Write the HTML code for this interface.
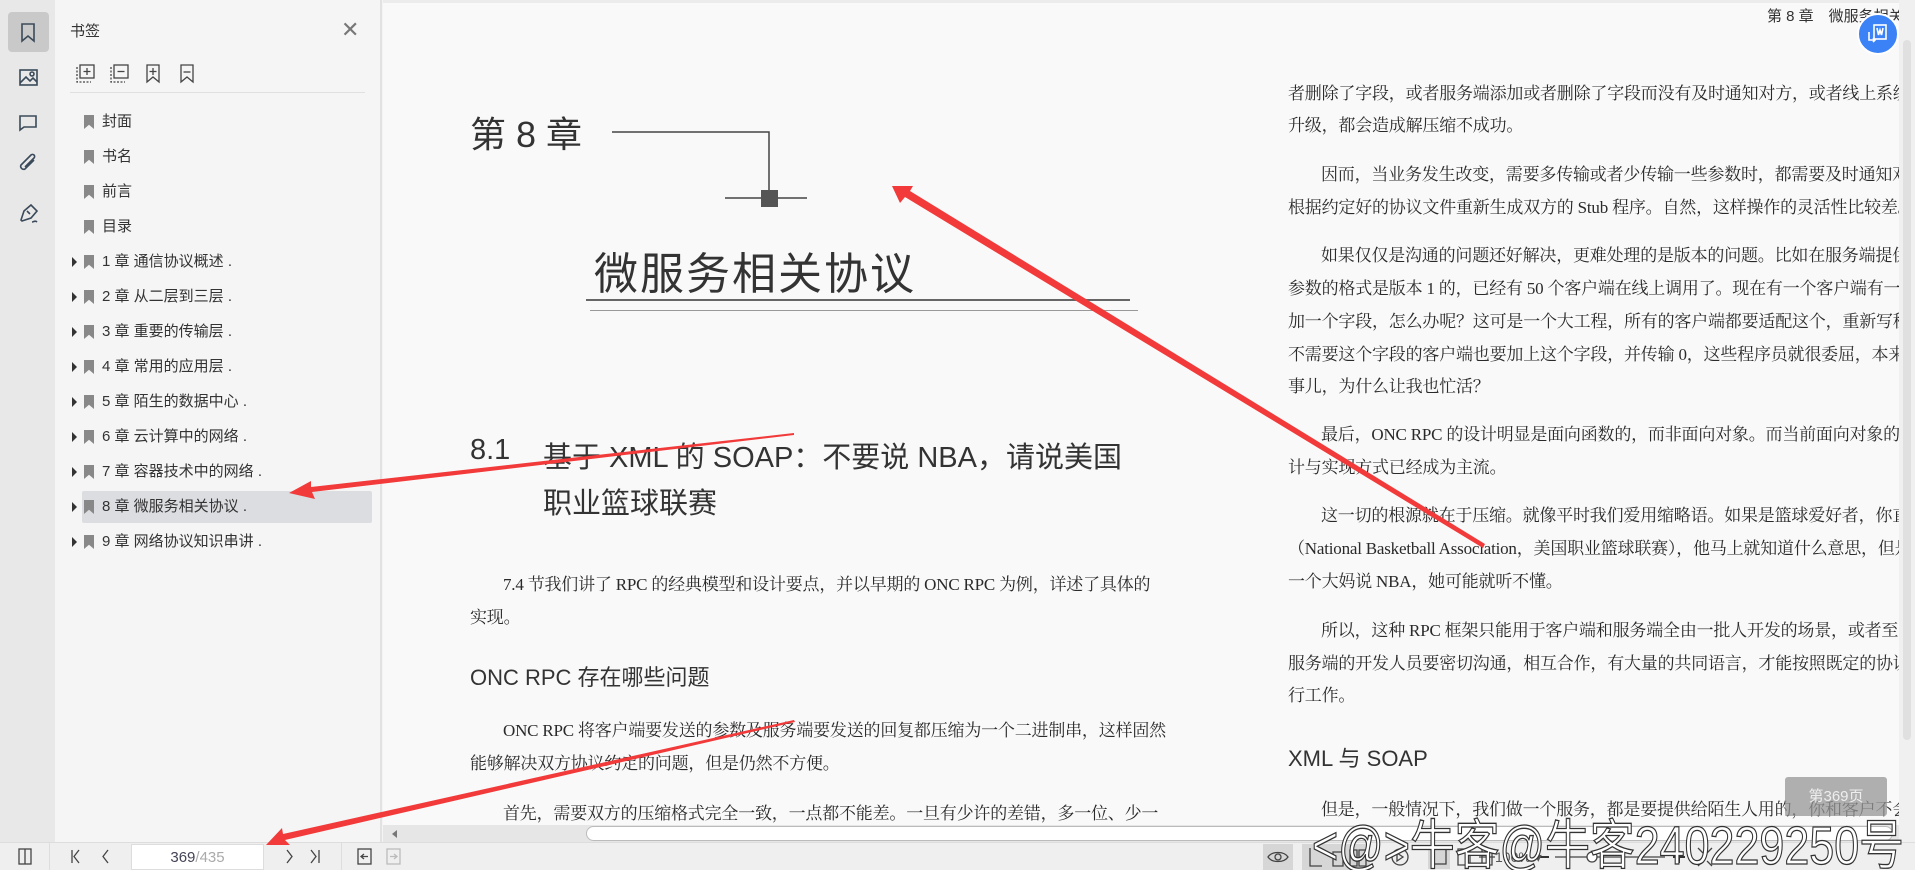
<!DOCTYPE html>
<html><head><meta charset="utf-8"><style>
*{margin:0;padding:0;box-sizing:border-box}
body{width:1915px;height:870px;overflow:hidden;background:#f4f4f4;font-family:"Liberation Sans","Noto Sans CJK SC",sans-serif;position:relative;color:#333}
.abs{position:absolute}
.serif{font-family:"Liberation Serif","Noto Serif CJK SC",serif;color:#2a2a2a}
.item{position:absolute;left:70px;font-size:15px;color:#333;height:30px;line-height:30px;white-space:nowrap}
.item .tri{position:absolute;left:2px;top:10px;width:0;height:0;border-left:5px solid #333;border-top:5px solid transparent;border-bottom:5px solid transparent}
.item .bm{position:absolute;left:14px;top:8px;width:10px;height:14px;background:#888;clip-path:polygon(0 0,100% 0,100% 100%,50% 70%,0 100%)}
.item .t{position:absolute;left:32px;top:0}
.p{position:absolute;font-size:17px;white-space:nowrap;letter-spacing:-0.2px}
</style></head><body>
<!-- icon bar -->
<div class="abs" style="left:0;top:0;width:55px;height:842px;background:#e8e8e8"></div>
<div class="abs" style="left:8px;top:12px;width:41px;height:40px;background:#c9c9c9;border-radius:4px"></div>
<svg class="abs" style="left:0;top:0" width="55" height="230" fill="none" stroke="#3a4a5a" stroke-width="1.6">
<path d="M22 24h12v17l-6-5-6 5z"/>
<rect x="20" y="70" width="17" height="15"/><path d="M20 83l6-6 4 4 3-3 4 4"/><circle cx="32" cy="74" r="2"/>
<path d="M20 116h16v11h-12l-4 3z"/>
<path d="M34 160l-9 9a3 3 0 0 1-4-4l10-10a2 2 0 0 1 3 3l-9 9"/>
<path d="M21 220l3-9 7-6 6 6-6 7-9 3zM27 211l3 3M32 222c2 0 3-2 5 0"/>
</svg>
<!-- panel -->
<div class="abs" style="left:55px;top:0;width:327px;height:842px;background:#f5f5f5;border-right:2px solid #e2e2e2"></div>
<div class="abs" style="left:70px;top:20px;font-size:15px;color:#333">书签</div>
<div class="abs" style="left:341px;top:17px;font-size:22px;color:#777;font-weight:300">✕</div>
<svg class="abs" style="left:76px;top:63px" width="130" height="22" fill="none" stroke="#444" stroke-width="1.3">
<rect x="4" y="2" width="14" height="13"/><path d="M11 5v7M7.5 8.5h7"/><path d="M1 4v15h14" stroke-dasharray="2 1.5"/>
<rect x="38" y="2" width="14" height="13"/><path d="M41.5 8.5h7"/><path d="M35 4v15h14" stroke-dasharray="2 1.5"/>
<path d="M71 2h12v17l-6-5-6 5z"/><path d="M77 5v7M73.5 8.5h7"/>
<path d="M105 2h12v17l-6-5-6 5z"/><path d="M107.5 9h7"/>
</svg>
<div class="abs" style="left:70px;top:92px;width:295px;height:1px;background:#e0e0e0"></div>
<div class="abs" style="left:82px;top:491px;width:290px;height:32px;background:#dcdde1;border-radius:2px"></div>
<div class="item" style="top:107px"><span class="bm"></span><span class="t">封面</span></div>
<div class="item" style="top:142px"><span class="bm"></span><span class="t">书名</span></div>
<div class="item" style="top:177px"><span class="bm"></span><span class="t">前言</span></div>
<div class="item" style="top:212px"><span class="bm"></span><span class="t">目录</span></div>
<div class="item" style="top:247px"><span class="tri"></span><span class="bm"></span><span class="t">1 章 通信协议概述 .</span></div>
<div class="item" style="top:282px"><span class="tri"></span><span class="bm"></span><span class="t">2 章 从二层到三层 .</span></div>
<div class="item" style="top:317px"><span class="tri"></span><span class="bm"></span><span class="t">3 章 重要的传输层 .</span></div>
<div class="item" style="top:352px"><span class="tri"></span><span class="bm"></span><span class="t">4 章 常用的应用层 .</span></div>
<div class="item" style="top:387px"><span class="tri"></span><span class="bm"></span><span class="t">5 章 陌生的数据中心 .</span></div>
<div class="item" style="top:422px"><span class="tri"></span><span class="bm"></span><span class="t">6 章 云计算中的网络 .</span></div>
<div class="item" style="top:457px"><span class="tri"></span><span class="bm"></span><span class="t">7 章 容器技术中的网络 .</span></div>
<div class="item" style="top:492px"><span class="tri"></span><span class="bm"></span><span class="t">8 章 微服务相关协议 .</span></div>
<div class="item" style="top:527px"><span class="tri"></span><span class="bm"></span><span class="t">9 章 网络协议知识串讲 .</span></div>

<!-- document -->
<div class="abs" style="left:383px;top:0;width:1516px;height:825px;background:#f9f9f9;border-top:3px solid #ececec"></div>
<div class="abs" style="left:1899px;top:0;width:16px;height:842px;background:#f0f0f0"></div>
<div class="abs" style="left:1903px;top:40px;width:8px;height:700px;background:#e0e0e0;border-radius:4px"></div>

<div class="abs" style="left:470px;top:106px;font-size:36px;color:#333">第 8 章</div>
<svg class="abs" style="left:600px;top:125px" width="220" height="90" fill="none" stroke="#444" stroke-width="1.5">
<path d="M12 7H169V73M125 73H207"/><rect x="161" y="65" width="17" height="17" fill="#555" stroke="none"/>
</svg>
<div class="abs" style="left:594px;top:238px;font-size:44px;color:#333;letter-spacing:2px">微服务相关协议</div>
<div class="abs" style="left:586px;top:299px;width:544px;height:2px;background:#666"></div>
<div class="abs" style="left:590px;top:310px;width:548px;height:1px;background:#999"></div>
<div class="abs" style="left:470px;top:434px;font-size:29px;color:#333">8.1</div>
<div class="abs" style="left:543px;top:434px;font-size:29px;color:#333;white-space:nowrap">基于 XML 的 SOAP：不要说 NBA，请说美国</div>
<div class="abs" style="left:543px;top:480px;font-size:29px;color:#333">职业篮球联赛</div>
<div class="p serif" style="left:503px;top:570px">7.4 节我们讲了 RPC 的经典模型和设计要点，并以早期的 ONC RPC 为例，详述了具体的</div>
<div class="p serif" style="left:470px;top:603px">实现。</div>
<div class="abs" style="left:470px;top:660px;font-size:22px;color:#333">ONC RPC 存在哪些问题</div>
<div class="p serif" style="left:503px;top:716px">ONC RPC 将客户端要发送的参数及服务端要发送的回复都压缩为一个二进制串，这样固然</div>
<div class="p serif" style="left:470px;top:749px">能够解决双方协议约定的问题，但是仍然不方便。</div>
<div class="p serif" style="left:503px;top:799px">首先，需要双方的压缩格式完全一致，一点都不能差。一旦有少许的差错，多一位、少一</div>

<div class="abs" style="left:1767px;top:5px;font-size:15px;color:#333;white-space:nowrap;width:132px;overflow:hidden">第 8 章　微服务相关协</div>
<div class="abs" style="left:1200px;top:0;width:699px;height:825px;overflow:hidden">
<div class="p serif" style="left:88px;top:79px">者删除了字段，或者服务端添加或者删除了字段而没有及时通知对方，或者线上系统</div>
<div class="p serif" style="left:88px;top:111px">升级，都会造成解压缩不成功。</div>
<div class="p serif" style="left:121px;top:160px">因而，当业务发生改变，需要多传输或者少传输一些参数时，都需要及时通知对方</div>
<div class="p serif" style="left:88px;top:193px">根据约定好的协议文件重新生成双方的 Stub 程序。自然，这样操作的灵活性比较差。</div>
<div class="p serif" style="left:121px;top:241px">如果仅仅是沟通的问题还好解决，更难处理的是版本的问题。比如在服务端提供一</div>
<div class="p serif" style="left:88px;top:274px">参数的格式是版本 1 的，已经有 50 个客户端在线上调用了。现在有一个客户端有一个</div>
<div class="p serif" style="left:88px;top:307px">加一个字段，怎么办呢？这可是一个大工程，所有的客户端都要适配这个，重新写程</div>
<div class="p serif" style="left:88px;top:340px">不需要这个字段的客户端也要加上这个字段，并传输 0，这些程序员就很委屈，本来</div>
<div class="p serif" style="left:88px;top:372px">事儿，为什么让我也忙活？</div>
<div class="p serif" style="left:121px;top:420px">最后，ONC RPC 的设计明显是面向函数的，而非面向对象。而当前面向对象的业</div>
<div class="p serif" style="left:88px;top:453px">计与实现方式已经成为主流。</div>
<div class="p serif" style="left:121px;top:501px">这一切的根源就在于压缩。就像平时我们爱用缩略语。如果是篮球爱好者，你直接</div>
<div class="p serif" style="left:88px;top:534px">（National Basketball Association，美国职业篮球联赛），他马上就知道什么意思，但是</div>
<div class="p serif" style="left:88px;top:567px">一个大妈说 NBA，她可能就听不懂。</div>
<div class="p serif" style="left:121px;top:616px">所以，这种 RPC 框架只能用于客户端和服务端全由一批人开发的场景，或者至少</div>
<div class="p serif" style="left:88px;top:649px">服务端的开发人员要密切沟通，相互合作，有大量的共同语言，才能按照既定的协议</div>
<div class="p serif" style="left:88px;top:681px">行工作。</div>
<div class="abs" style="left:88px;top:741px;font-size:22px;color:#333;white-space:nowrap">XML 与 SOAP</div>
<div class="p serif" style="left:121px;top:795px">但是，一般情况下，我们做一个服务，都是要提供给陌生人用的，你和客户不会经</div>
</div>
<div class="abs" style="left:1785px;top:777px;width:102px;height:39px;background:rgba(150,150,150,.75);border-radius:3px;color:#eee;font-size:15px;text-align:center;line-height:39px">第369页</div>
<div class="abs" style="left:1857px;top:13px;width:42px;height:42px;border-radius:50%;background:#3b82f6;border:2px solid #fff"></div>
<svg class="abs" style="left:1865px;top:22px" width="26" height="24" fill="none" stroke="#fff" stroke-width="1.6"><rect x="9" y="3" width="12" height="14"/><path d="M12 6l1.5 7 1.5-5 1.5 5 1.5-7M4 10v8h6M8 16l2 2-2 2"/></svg>

<!-- h scrollbar -->
<div class="abs" style="left:383px;top:825px;width:1516px;height:17px;background:#e6e6e6"></div>
<div class="abs" style="left:392px;top:830px;width:0;height:0;border-right:5px solid #777;border-top:4px solid transparent;border-bottom:4px solid transparent"></div>
<div class="abs" style="left:586px;top:826px;width:1307px;height:15px;background:#fff;border:1px solid #bbb;border-radius:8px"></div>

<!-- bottom bar -->
<div class="abs" style="left:0;top:842px;width:1915px;height:28px;background:#efefef;border-top:1px solid #ddd"></div>
<div class="abs" style="left:49px;top:842px;width:1px;height:28px;background:#ddd"></div>
<div class="abs" style="left:341px;top:842px;width:1px;height:28px;background:#ddd"></div>
<div class="abs" style="left:131px;top:844px;width:133px;height:26px;background:#fff;border:1px solid #ddd;font-size:15px;text-align:center;line-height:25px"><span style="color:#445">369</span><span style="color:#aaa">/435</span></div>
<svg class="abs" style="left:0;top:842px" width="420" height="28" fill="none" stroke="#444" stroke-width="1.3">
<rect x="19" y="7" width="12" height="15"/><path d="M25 7v15"/>
<path d="M72 8v13M79 8l-5 6.5 5 6.5M108 8l-5 6.5 5 6.5M287 8l5 6.5-5 6.5M311 8l5 6.5-5 6.5M319 8v13"/>
<rect x="358" y="7" width="13" height="15"/><path d="M368 14.5h-7M364 12l-3 2.5 3 2.5"/>
<rect x="387" y="7" width="13" height="15" stroke="#bbb"/><path d="M390 14.5h7M394 12l3 2.5-3 2.5" stroke="#bbb"/>
</svg>
<svg class="abs" style="left:1255px;top:842px" width="660" height="28" fill="none" stroke="#444" stroke-width="1.3">
<rect x="8" y="2" width="30" height="26" fill="#d6d6d6" stroke="none"/><path d="M13 15c4-6 16-6 20 0-4 6-16 6-20 0z"/><circle cx="23" cy="15" r="3"/>
<rect x="47" y="2" width="68" height="26" fill="#d6d6d6" stroke="none"/><path d="M55 6v18h12M78 10h10v14H78zM95 8h7v16h-7zM104 8h7v16h-7z"/>
<circle cx="145" cy="15" r="8"/><path d="M142 11v8l6-4z"/>
<rect x="173" y="3" width="22" height="24" fill="#d6d6d6" stroke="none"/><rect x="177" y="7" width="14" height="15"/>
<path d="M203 7h12v16h-12zM227 7h10v16h-10zM224 15h16"/>
<path d="M284 15h10M418 15h12M424 9v12" stroke="#333" stroke-width="2"/>
<path d="M300 15h110"/><circle cx="337" cy="15" r="5" fill="#fff"/>
<path d="M443 6l5 5M457 6l-5 5M443 24l5-5M457 24l-5-5"/>
</svg>
<div class="abs" style="left:1495px;top:849px;font-size:14px;color:#555">100% ▾</div>

<!-- red arrows -->
<svg class="abs" style="left:0;top:0" width="1915" height="870">
<g fill="#f23a3a">
<polygon points="1484,546 1485,544 910,191 913,186 892,186 900,203 905,197 1483,548"/>
<polygon points="794,433 794,435 312,492 315,499 289,493 311,481 311,487"/>
<polygon points="794,720 795,722 285,840 290,845 266,845 282,828 283,834"/>
</g>
</svg>
<!-- watermark -->
<svg class="abs" style="left:1300px;top:800px" width="615" height="70">
<text x="12" y="64" font-family="Liberation Sans, Noto Sans CJK SC, sans-serif" font-size="54" textLength="592" lengthAdjust="spacingAndGlyphs" fill="#fff" stroke="#333" stroke-width="1.3">&lt;@&gt;牛客@牛客240229250号</text>
</svg>
</body></html>
